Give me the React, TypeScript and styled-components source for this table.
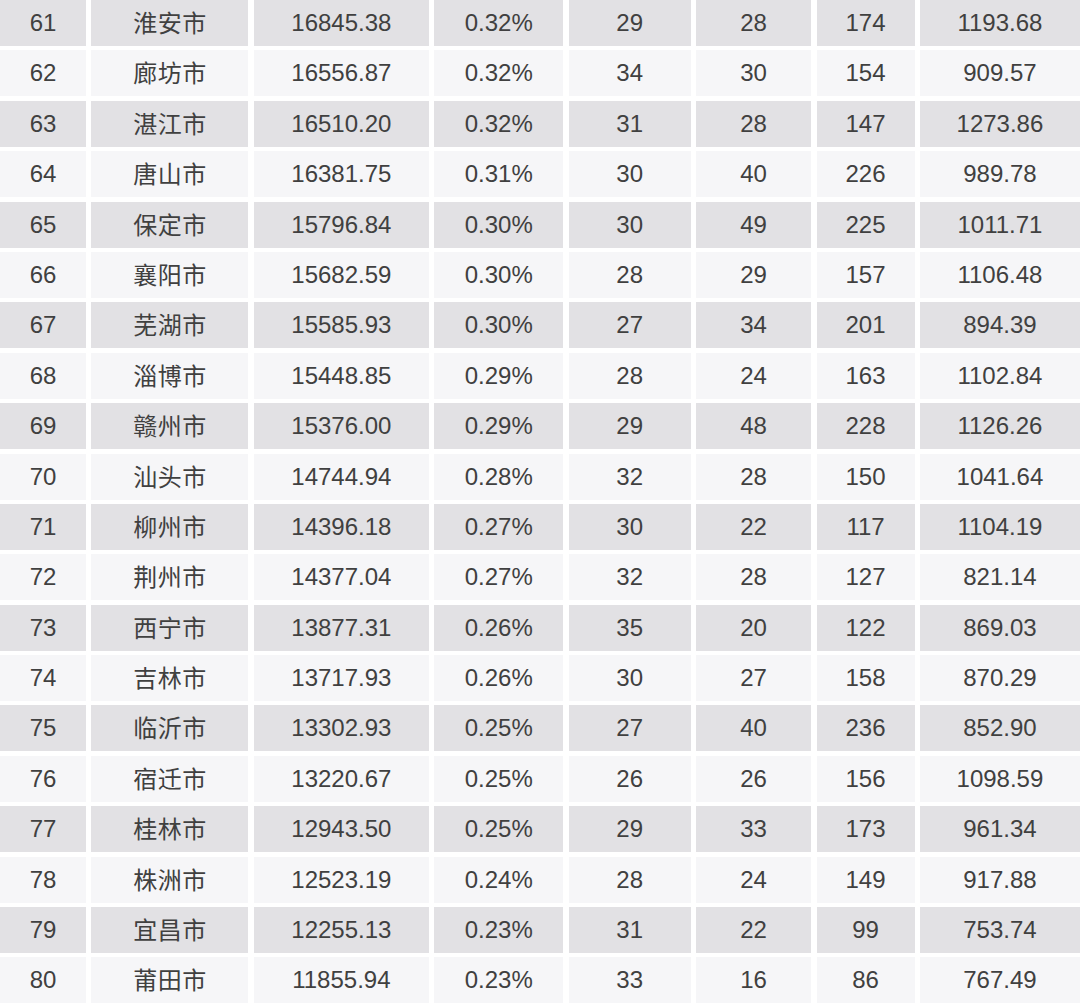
import React, { FC } from "react";
import styled, { createGlobalStyle } from "styled-components";

const GlobalStyle = createGlobalStyle`
  html, body {
    margin: 0;
    padding: 0;
    background: #ffffff;
  }
`;

const rows: string[][] = [
  ["61", "淮安市", "16845.38", "0.32%", "29", "28", "174", "1193.68"],
  ["62", "廊坊市", "16556.87", "0.32%", "34", "30", "154", "909.57"],
  ["63", "湛江市", "16510.20", "0.32%", "31", "28", "147", "1273.86"],
  ["64", "唐山市", "16381.75", "0.31%", "30", "40", "226", "989.78"],
  ["65", "保定市", "15796.84", "0.30%", "30", "49", "225", "1011.71"],
  ["66", "襄阳市", "15682.59", "0.30%", "28", "29", "157", "1106.48"],
  ["67", "芜湖市", "15585.93", "0.30%", "27", "34", "201", "894.39"],
  ["68", "淄博市", "15448.85", "0.29%", "28", "24", "163", "1102.84"],
  ["69", "赣州市", "15376.00", "0.29%", "29", "48", "228", "1126.26"],
  ["70", "汕头市", "14744.94", "0.28%", "32", "28", "150", "1041.64"],
  ["71", "柳州市", "14396.18", "0.27%", "30", "22", "117", "1104.19"],
  ["72", "荆州市", "14377.04", "0.27%", "32", "28", "127", "821.14"],
  ["73", "西宁市", "13877.31", "0.26%", "35", "20", "122", "869.03"],
  ["74", "吉林市", "13717.93", "0.26%", "30", "27", "158", "870.29"],
  ["75", "临沂市", "13302.93", "0.25%", "27", "40", "236", "852.90"],
  ["76", "宿迁市", "13220.67", "0.25%", "26", "26", "156", "1098.59"],
  ["77", "桂林市", "12943.50", "0.25%", "29", "33", "173", "961.34"],
  ["78", "株洲市", "12523.19", "0.24%", "28", "24", "149", "917.88"],
  ["79", "宜昌市", "12255.13", "0.23%", "31", "22", "99", "753.74"],
  ["80", "莆田市", "11855.94", "0.23%", "33", "16", "86", "767.49"],
];

const Table = styled.div`
  display: grid;
  grid-template-columns: 86px 157px 175px 129px 122px 115px 98px 160px;
  grid-auto-rows: 46px;
  column-gap: 5.43px;
  row-gap: 4.4px;
  width: 1080px;
  font-size: 24px;
  color: #404040;
`;

const Cell = styled.div<{ $shaded: boolean; $cjk?: boolean }>`
  display: flex;
  align-items: center;
  justify-content: center;
  background: ${(p) => (p.$shaded ? "#e2e1e4" : "#f6f6f8")};
  font-family: ${(p) =>
    p.$cjk
      ? `"Noto Sans CJK SC", sans-serif`
      : `"Liberation Sans", "Noto Sans CJK SC", sans-serif`};
  letter-spacing: ${(p) => (p.$cjk ? "0.5px" : "0")};
  padding-bottom: ${(p) => (p.$cjk ? "2px" : "0")};
  line-height: 1;
  white-space: nowrap;
`;

const App: FC = () => (
  <>
    <GlobalStyle />
    <Table>
      {rows.map((row, i) =>
        row.map((value, j) => (
          <Cell key={`${i}-${j}`} $shaded={i % 2 === 0} $cjk={j === 1}>
            {value}
          </Cell>
        ))
      )}
    </Table>
  </>
);

export default App;
